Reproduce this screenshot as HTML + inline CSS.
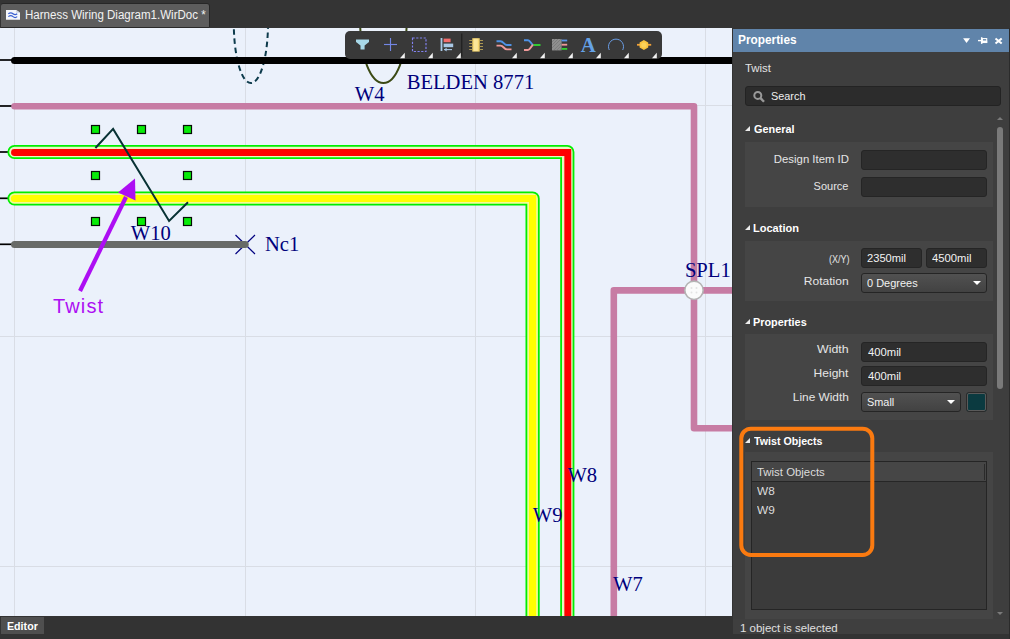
<!DOCTYPE html>
<html>
<head>
<meta charset="utf-8">
<title>Harness Wiring Diagram</title>
<style>
html,body{margin:0;padding:0;}
body{width:1010px;height:639px;overflow:hidden;background:#333333;position:relative;font-family:"Liberation Sans",sans-serif;font-size:11.2px;color:#dcdcdc;}
.abs{position:absolute;}
.t{position:absolute;white-space:nowrap;line-height:1;transform-origin:0 50%;}
.ser{font-family:"Liberation Serif",serif;font-size:20px;color:#00007c;}
#topbar{left:0;top:0;width:1010px;height:28px;background:#343434;}
#doctab{left:1px;top:4px;width:208px;height:23px;background:#5d5d5d;border-radius:2px 2px 0 0;box-shadow:1px 0 0 #262626, 0 1px 0 #2a2a2a, 0 -1px 0 #272727;}
#canvas{left:0;top:28px;width:732px;height:588px;background:#ebf1fb;overflow:hidden;}
#botbar{left:0;top:616px;width:1010px;height:23px;background:#333333;}
#edtab{left:1px;top:617px;width:43px;height:17px;background:#4f4f4f;}
#panel{left:733px;top:29px;width:275.5px;height:605px;background:#3e3e3e;}
#ptitle{left:0;top:0;width:275.5px;height:23px;background:#6084aa;}
.grp{position:absolute;left:12px;width:248px;background:#454545;}
.inp{position:absolute;background:#2e2e2e;border:1px solid #252525;border-radius:3px;box-sizing:border-box;}
.dd{position:absolute;background:linear-gradient(#515151,#424242);border:1px solid #252525;border-radius:3px;box-sizing:border-box;}
.lbl{position:absolute;white-space:nowrap;line-height:1;color:#e6e6e6;text-align:right;transform-origin:100% 50%;}
.hd{position:absolute;white-space:nowrap;line-height:1;color:#ffffff;font-weight:bold;font-size:11.5px;transform-origin:0 50%;}
.tri{position:absolute;width:0;height:0;border-left:5.2px solid transparent;border-bottom:5.2px solid #ececec;}
.w{color:#f2f2f2;}
</style>
</head>
<body>
<div id="topbar" class="abs"></div>
<div id="doctab" class="abs">
  <svg class="abs" style="left:5px;top:6px" width="14" height="9.8" viewBox="0 0 15 11" preserveAspectRatio="none">
    <path d="M0 0H11L15 3V11H0Z" fill="#f4f6fb"/>
    <path d="M11 0V3H15Z" fill="#c9d0e0"/>
    <path d="M2.5 4.2C4.5 2.6 6 2.8 7.5 4.2S10.5 5.6 12 4.2" fill="none" stroke="#3a5fd0" stroke-width="1.3"/>
    <path d="M2.5 7.4C4.5 5.8 6 6 7.5 7.4S10.5 8.8 12 7.4" fill="none" stroke="#3a5fd0" stroke-width="1.3"/>
  </svg>
  <span class="t w" id="tx_tab" style="left:23.87px;top:4.80px;font-size:12px;transform:scaleX(0.961);">Harness Wiring Diagram1.WirDoc *</span>
</div>

<div id="canvas" class="abs">
<svg class="abs" style="left:0;top:0" width="732" height="588" viewBox="0 28 732 588">
  <!-- grid -->
  <g stroke="#d9dde5" stroke-width="1" shape-rendering="crispEdges">
    <line x1="14.5" y1="27" x2="14.5" y2="616"/>
    <line x1="245.5" y1="27" x2="245.5" y2="616"/>
    <line x1="475.5" y1="27" x2="475.5" y2="616"/>
    <line x1="705.5" y1="27" x2="705.5" y2="616"/>
    <line x1="0" y1="105.5" x2="732" y2="105.5"/>
    <line x1="0" y1="336.5" x2="732" y2="336.5"/>
    <line x1="0" y1="566.5" x2="732" y2="566.5"/>
  </g>
  <!-- ellipses -->
  <ellipse cx="250.9" cy="23.5" rx="17.1" ry="59.6" fill="none" stroke="#0d3b4c" stroke-width="2" stroke-dasharray="5.5 3.6"/>
  <ellipse cx="383.4" cy="23.5" rx="23.2" ry="59.5" fill="none" stroke="#3b4a14" stroke-width="2"/>
  <!-- pin stubs -->
  <g stroke="#000" stroke-width="1.7">
    <line x1="0" y1="60" x2="12" y2="60"/>
    <line x1="0" y1="106" x2="12" y2="106"/>
    <line x1="0" y1="152" x2="9" y2="152"/>
    <line x1="0" y1="198.3" x2="9" y2="198.3"/>
    <line x1="0" y1="244.3" x2="12" y2="244.3"/>
  </g>
  <!-- black wire -->
  <line x1="14.5" y1="60.5" x2="732" y2="60.5" stroke="#000" stroke-width="7" stroke-linecap="round"/>
  <!-- pink wires -->
  <g fill="none" stroke="#c77ca4" stroke-width="6.6" stroke-linecap="round" stroke-linejoin="round">
    <path d="M14.5 106.3H694V428.2H740"/>
    <path d="M740 290.4H613.8V620"/>
  </g>
  <!-- red wire -->
  <g fill="none" stroke-linecap="round" stroke-linejoin="round">
    <path d="M14.5 152H567.3V620" stroke="#00ee00" stroke-width="14.2"/>
    <path d="M14.5 152H567.3V620" stroke="#e8f7c0" stroke-width="10.6"/>
    <path d="M14.5 152.5H567.8V620" stroke="#ff0000" stroke-width="6.9" stroke-linejoin="miter"/>
  </g>
  <!-- yellow wire -->
  <g fill="none" stroke-linecap="round" stroke-linejoin="round">
    <path d="M14.5 198.5H532.6V620" stroke="#00ee00" stroke-width="14.2"/>
    <path d="M14.5 198.5H532.6V620" stroke="#f2fb9a" stroke-width="10.6"/>
    <path d="M14.5 198.5H532.6V620" stroke="#ffff00" stroke-width="7.2" stroke-linejoin="miter"/>
  </g>
  <!-- gray wire -->
  <!-- X no-connect -->
  <g stroke="#000080" stroke-width="1.15">
    <line x1="235.5" y1="235" x2="255" y2="254"/>
    <line x1="255" y1="235" x2="235.5" y2="254"/>
  </g>
  <path d="M14.5 244.4H245.2" stroke="#686b68" stroke-width="7" stroke-linecap="round"/>
  <!-- splice -->
  <circle cx="694" cy="290.3" r="9.2" fill="#fbfbfb" stroke="#b4b4b4" stroke-width="1.6"/>
  <g fill="#e3e3e3">
    <circle cx="691.5" cy="288" r="1"/><circle cx="696.5" cy="288" r="1"/>
    <circle cx="691.5" cy="292.6" r="1"/><circle cx="696.5" cy="292.6" r="1"/>
  </g>
  <!-- twist symbol -->
  <polyline points="95.4,148 113.1,128.9 169.1,220.9 188,202.3" fill="none" stroke="#083234" stroke-width="2"/>
  <!-- handles -->
  <g fill="#08ec08" stroke="#050d05" stroke-width="1.2">
    <rect x="91.5" y="125.5" width="8" height="8"/>
    <rect x="137.5" y="125.5" width="8" height="8"/>
    <rect x="183.5" y="125.5" width="8" height="8"/>
    <rect x="91.5" y="171.5" width="8" height="8"/>
    <rect x="183.5" y="171.5" width="8" height="8"/>
    <rect x="91.5" y="217.5" width="8" height="8"/>
    <rect x="137.5" y="217.5" width="8" height="8"/>
    <rect x="183.5" y="217.5" width="8" height="8"/>
  </g>
  <!-- arrow -->
  <line x1="80" y1="291" x2="126" y2="197" stroke="#ad0ef3" stroke-width="4.2"/>
  <polygon points="135,178.5 135.5,200.5 118,192.5" fill="#ad0ef3"/>
  <!-- labels -->
  <g font-family="Liberation Serif, serif" font-size="20.6" fill="#00007c">
    <text id="tx_w4" x="354.8" y="101">W4</text>
    <text id="tx_belden" x="406.7" y="89.4">BELDEN 8771</text>
    <text id="tx_w10" x="130.8" y="239.7">W10</text>
    <text id="tx_nc1" x="265" y="251">Nc1</text>
    <text id="tx_spl1" x="684.9" y="276.7">SPL1</text>
    <text id="tx_w8" x="567.4" y="482">W8</text>
    <text id="tx_w9" x="532.8" y="521.6">W9</text>
    <text id="tx_w7" x="613.1" y="590.7">W7</text>
  </g>
  <text id="tx_twist" x="53" y="312.5" font-family="Liberation Sans, sans-serif" font-size="20" letter-spacing="1.15" fill="#ad0ef3">Twist</text>
</svg>
</div>

<!-- floating toolbar -->
<div id="toolbar" class="abs" style="left:345px;top:31px;width:317px;height:27.5px;background:#393939;border-radius:5px;">
<svg class="abs" style="left:0;top:0" width="317" height="28" viewBox="345 31 317 28">
  <!-- filter -->
  <path d="M356 39.4H369V42L364.6 45.6V49.4H360.5V45.6L356 42Z" fill="#a8d8e8"/>
  <!-- crosshair -->
  <g stroke="#7386e4" stroke-width="1.15" fill="none">
    <line x1="384" y1="44.5" x2="397" y2="44.5"/><line x1="390.5" y1="38" x2="390.5" y2="51"/>
  </g>
  <!-- dashed square -->
  <rect x="412.5" y="38" width="13.5" height="13.5" fill="none" stroke="#8282f0" stroke-width="1.15" stroke-dasharray="2.2 1.5"/>
  <!-- align -->
  <rect x="440.6" y="38" width="1.8" height="13" fill="#a9c8e6"/>
  <rect x="443.6" y="38.6" width="7" height="3.6" fill="#f26d6d"/>
  <rect x="443.6" y="43.6" width="9.6" height="3.6" fill="#a9c8e6"/>
  <path d="M444 49.6H452" stroke="#a9c8e6" stroke-width="1.1"/>
  <path d="M446.6 47.8L444 49.6L446.6 51.4Z" fill="#a9c8e6"/>
  <!-- separator -->
  <rect x="461" y="33.5" width="1.4" height="23" fill="#222222"/>
  <!-- component -->
  <rect x="472.3" y="38.2" width="7.4" height="13.4" fill="#f6d670"/><rect x="473.8" y="38.8" width="4" height="12.2" fill="#fae69a"/>
  <g stroke="#b9a255" stroke-width="0.9">
    <line x1="469.2" y1="40.5" x2="472.4" y2="40.5"/><line x1="469.2" y1="43.5" x2="472.4" y2="43.5"/><line x1="469.2" y1="46.5" x2="472.4" y2="46.5"/><line x1="469.2" y1="49.5" x2="472.4" y2="49.5"/>
    <line x1="479.8" y1="40.5" x2="483" y2="40.5"/><line x1="479.8" y1="43.5" x2="483" y2="43.5"/><line x1="479.8" y1="46.5" x2="483" y2="46.5"/><line x1="479.8" y1="49.5" x2="483" y2="49.5"/>
  </g>
  <!-- wire -->
  <path d="M496.5 41.2H500.5C503.5 41.2 504 45 507 45H511.5" fill="none" stroke="#4f92e6" stroke-width="1.9"/>
  <path d="M496.5 45.6H500.5C503.5 45.6 504 49.4 507 49.4H511.5" fill="none" stroke="#f09a9a" stroke-width="1.9"/>
  <!-- splice -->
  <path d="M524 40.2H528C530.5 40.2 531 45 533.5 45" fill="none" stroke="#4f92e6" stroke-width="1.9"/>
  <path d="M524 50H528C530.5 50 531 45 533.5 45" fill="none" stroke="#f09a9a" stroke-width="1.9"/>
  <path d="M533.5 45H540.5" fill="none" stroke="#32d232" stroke-width="1.9"/>
  <!-- harness bundle -->
  <rect x="552" y="39" width="9.6" height="11.4" fill="#8f8f8f"/>
  <g stroke="#6e6e6e" stroke-width="0.6"><path d="M552 42L555 39M552 45L558 39M552 48L561 39M553.5 50.4L561.6 42.3M556.5 50.4L561.6 45.3M559.5 50.4L561.6 48.3"/></g>
  <rect x="561.6" y="39.6" width="5.6" height="1.8" fill="#5a96ea"/>
  <rect x="561.6" y="43.8" width="5.6" height="1.8" fill="#f19a9a"/>
  <rect x="561.6" y="48" width="5.6" height="1.8" fill="#32d232"/>
  <!-- A -->
  <text x="588.2" y="51.5" text-anchor="middle" font-family="Liberation Serif, serif" font-weight="bold" font-size="20.8" fill="#65a2e6">A</text>
  <!-- arc -->
  <path d="M609.3 50A7.5 7.5 0 1 1 622.7 50" fill="none" stroke="#6a9ee6" stroke-width="1"/>
  <!-- junction -->
  <line x1="637" y1="44.8" x2="651.2" y2="44.8" stroke="#f0a038" stroke-width="1.8"/>
  <path d="M643.9 40.1L648.2 42.6V47.6L643.9 50.1L639.6 47.6V42.6Z" fill="#f8c440"/>
  <circle cx="643.9" cy="45" r="2.6" fill="#fad25a"/>
  <!-- corner triangles -->
  <g fill="#f2f2f2">
    <path d="M404.8 52.8V58.2H400.0Z"/><path d="M432.8 52.8V58.2H428.0Z"/><path d="M460.8 52.8V58.2H456.0Z"/>
    <path d="M516.8 52.8V58.2H512.0Z"/><path d="M544.8 52.8V58.2H540.0Z"/><path d="M572.8 52.8V58.2H568.0Z"/>
    <path d="M600.8 52.8V58.2H596.0Z"/><path d="M628.8 52.8V58.2H624.0Z"/><path d="M656.8 52.8V58.2H652.0Z"/>
  </g>
</svg>
</div>

<div id="botbar" class="abs"></div>
<div class="abs" style="left:1008.5px;top:28px;width:1.5px;height:611px;background:#2b2b2b;"></div>
<div id="edtab" class="abs"><span class="t" id="tx_editor" style="left:5.55px;top:3.60px;font-weight:bold;color:#fff;font-size:11.5px;transform:scaleX(0.927);">Editor</span></div>

<!-- Properties panel -->
<div id="panel" class="abs">
  <div id="ptitle" class="abs">
    <span class="t" id="tx_ptitle" style="left:5.08px;top:5.30px;font-weight:bold;color:#fff;font-size:12.5px;transform:scaleX(0.947);">Properties</span>
    <svg class="abs" style="left:225px;top:5px" width="50" height="14" viewBox="958 34 50 14">
      <path d="M963.1 38.2H970L966.55 43.1Z" fill="#fff"/>
      <path d="M978 40.6H981.6" stroke="#fff" stroke-width="1.4"/>
      <path d="M981.7 37.2V43.9" stroke="#fff" stroke-width="1.5"/>
      <rect x="982.4" y="38.6" width="4.3" height="3.9" fill="none" stroke="#fff" stroke-width="1.1"/>
      <rect x="982.4" y="40.5" width="4.8" height="2.5" fill="#fff"/>
      <path d="M995.5 38.4L1001.7 43.6M1001.7 38.4L995.5 43.6" stroke="#fff" stroke-width="2"/>
    </svg>
  </div>
  <span class="t" id="tx_ptwist" style="left:12.40px;top:34.00px;color:#e2e2e2;transform:scaleX(1.018);">Twist</span>
  <!-- search -->
  <div class="inp" style="left:12px;top:57px;width:256px;height:19.5px;background:#2c2c2c;border-color:#232323;"></div>
  <svg class="abs" style="left:20px;top:61px" width="13" height="13" viewBox="0 0 13 13"><circle cx="4.8" cy="5.4" r="3.5" fill="none" stroke="#999999" stroke-width="2"/><path d="M7.5 8.1L11 11.8" stroke="#999999" stroke-width="2.4"/></svg>
  <span class="t" id="tx_search" style="left:37.86px;top:62.21px;color:#eeeeee;transform:scaleX(0.971);">Search</span>

  <!-- scrollbar -->
  <div class="abs" style="left:264.2px;top:98px;width:5.8px;height:262px;background:#7a7a7a;border-radius:3px;"></div>
  <div class="abs" style="left:263.5px;top:87.5px;width:0;height:0;border-left:3.7px solid transparent;border-right:3.7px solid transparent;border-bottom:3.7px solid #7a7a7a;"></div>
  <div class="abs" style="left:263.5px;top:582.5px;width:0;height:0;border-left:3.7px solid transparent;border-right:3.7px solid transparent;border-top:3.7px solid #7a7a7a;"></div>

  <!-- General -->
  <div class="tri" style="left:11.6px;top:97.2px;"></div>
  <span class="hd" id="tx_general" style="left:21.24px;top:94.90px;transform:scaleX(0.945);">General</span>
  <div class="grp" style="top:112.5px;height:65px;"></div>
  <span class="lbl" id="tx_design" style="right:159.71px;top:124.90px;transform:scaleX(1.016);">Design Item ID</span>
  <div class="inp" style="left:128px;top:121px;width:126px;height:20px;"></div>
  <span class="lbl" id="tx_source" style="right:159.92px;top:152.00px;transform:scaleX(0.983);">Source</span>
  <div class="inp" style="left:128px;top:148px;width:126px;height:20px;"></div>

  <!-- Location -->
  <div class="tri" style="left:11.6px;top:196.2px;"></div>
  <span class="hd" id="tx_location" style="left:20.45px;top:194.00px;transform:scaleX(0.958);">Location</span>
  <div class="grp" style="top:211.5px;height:60.5px;"></div>
  <span class="lbl" id="tx_xy" style="right:159.25px;top:225.00px;transform:scaleX(0.808);">(X/Y)</span>
  <div class="inp" style="left:128px;top:219px;width:61px;height:19.5px;"></div>
  <span class="t w" id="tx_2350" style="left:133.95px;top:224.21px;transform:scaleX(0.997);">2350mil</span>
  <div class="inp" style="left:193px;top:219px;width:61px;height:19.5px;"></div>
  <span class="t w" id="tx_4500" style="left:198.61px;top:224.21px;transform:scaleX(1.008);">4500mil</span>
  <span class="lbl" id="tx_rotation" style="right:160.05px;top:246.80px;transform:scaleX(1.077);">Rotation</span>
  <div class="dd" style="left:128px;top:243.5px;width:126px;height:20px;"></div>
  <span class="t w" id="tx_0deg" style="left:134.18px;top:248.71px;transform:scaleX(0.981);">0 Degrees</span>
  <div class="abs" style="left:240px;top:252px;width:0;height:0;border-left:4.5px solid transparent;border-right:4.5px solid transparent;border-top:4.5px solid #fff;"></div>

  <!-- Properties -->
  <div class="tri" style="left:11.6px;top:289.7px;"></div>
  <span class="hd" id="tx_props" style="left:20.49px;top:287.60px;transform:scaleX(0.944);">Properties</span>
  <div class="grp" style="top:305px;height:85.5px;"></div>
  <span class="lbl" id="tx_width" style="right:159.59px;top:315.00px;transform:scaleX(1.106);">Width</span>
  <div class="inp" style="left:128px;top:313px;width:126px;height:19.5px;"></div>
  <span class="t w" id="tx_400a" style="left:134.77px;top:317.80px;transform:scaleX(1.005);">400mil</span>
  <span class="lbl" id="tx_height" style="right:159.99px;top:339.00px;transform:scaleX(1.074);">Height</span>
  <div class="inp" style="left:128px;top:337px;width:126px;height:19.5px;"></div>
  <span class="t w" id="tx_400b" style="left:134.77px;top:341.80px;transform:scaleX(1.005);">400mil</span>
  <span class="lbl" id="tx_linew" style="right:159.76px;top:363.00px;transform:scaleX(1.060);">Line Width</span>
  <div class="dd" style="left:128px;top:362.5px;width:100px;height:20px;"></div>
  <span class="t w" id="tx_small" style="left:134.38px;top:367.71px;transform:scaleX(0.973);">Small</span>
  <div class="abs" style="left:214px;top:370.5px;width:0;height:0;border-left:4.5px solid transparent;border-right:4.5px solid transparent;border-top:4.5px solid #fff;"></div>
  <div class="abs" style="left:232.5px;top:362.5px;width:21.5px;height:20px;box-sizing:border-box;background:#0b3a40;border:1px solid #2a2a2a;outline:1px solid #5a5a5a;outline-offset:-2px;border-radius:3px;"></div>

  <!-- Twist Objects -->
  <div class="tri" style="left:11.6px;top:408.7px;"></div>
  <span class="hd" id="tx_twobj" style="left:21.00px;top:406.60px;transform:scaleX(0.927);">Twist Objects</span>
  <div class="grp" style="top:423px;height:167px;"></div>
  <div class="abs" style="left:18px;top:432px;width:236px;height:149px;box-sizing:border-box;background:#3b3b3b;border:1px solid #252525;"></div>
  <div class="abs" style="left:19px;top:433px;width:234px;height:18.5px;background:#464646;border-bottom:1px solid #262626;"></div>
  <div class="abs" style="left:251px;top:435px;width:1px;height:16px;background:#2a2a2a;"></div>
  <span class="t" id="tx_twcol" style="left:24.19px;top:437.71px;color:#dcdcdc;transform:scaleX(1.019);">Twist Objects</span>
  <span class="t" id="tx_rw8" style="left:23.96px;top:456.60px;color:#dcdcdc;transform:scaleX(1.054);">W8</span>
  <span class="t" id="tx_rw9" style="left:24.00px;top:476.30px;color:#dcdcdc;transform:scaleX(1.058);">W9</span>

  <!-- orange highlight -->
  <svg class="abs" style="left:0;top:390px" width="160" height="150" viewBox="733 419 160 150"><rect x="741.3" y="428.7" width="131" height="126.2" rx="9.6" ry="9.6" fill="none" stroke="#fa7a10" stroke-width="4"/></svg>

  <!-- status -->
  <div class="abs" style="left:0;top:590px;width:275.5px;height:15px;background:#3f3f3f;"></div>
  <span class="t" id="tx_status" style="left:6.84px;top:593.90px;color:#e0e0e0;transform:scaleX(1.027);">1 object is selected</span>
</div>
</body>
</html>
